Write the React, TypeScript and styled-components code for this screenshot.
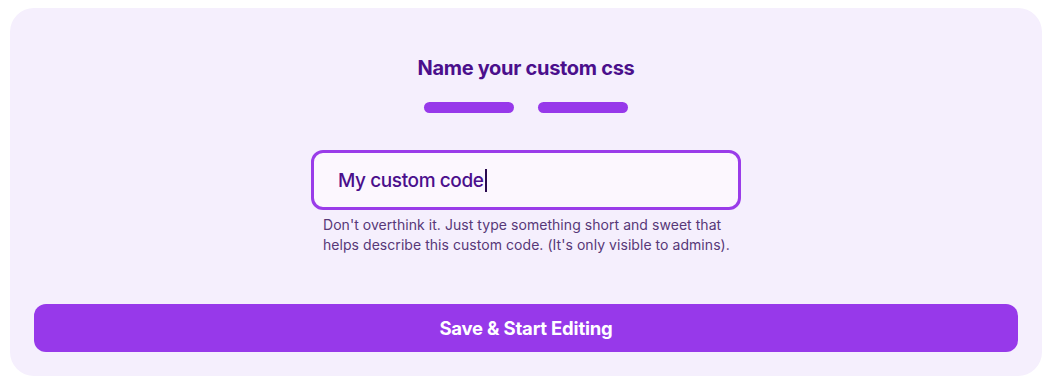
import React from 'react';
import styled, { createGlobalStyle } from 'styled-components';

const GlobalStyle = createGlobalStyle`
  body {
    margin: 0;
    background: #ffffff;
    font-family: Inter, "Noto Sans", sans-serif;
  }
`

export default function App() {
  return (
    <>
      <GlobalStyle />
      <Card>
        <Title>Name your custom css</Title>
        <Steps>
          <Step />
          <Step />
        </Steps>
        <Field>
          <InputBox>
            <InputText>My custom code</InputText>
            <Caret />
          </InputBox>
          <Hint>
            Don't overthink it. Just type something short and sweet that
            helps describe this custom code. (It's only visible to admins).
          </Hint>
        </Field>
        <SaveButton>Save &amp; Start Editing</SaveButton>
      </Card>
    </>
  )
}

const Card = styled.section`
  box-sizing: border-box;
  margin: 8px 10px;
  width: 1032px;
  height: 368px;
  background: #f5effd;
  border-radius: 24px;
  padding: 48px 24px 24px;
  display: flex;
  flex-direction: column;
  align-items: center;
`

const Title = styled.h1`
  margin: 0;
  font-size: 20px;
  line-height: 24px;
  font-weight: 700;
  letter-spacing: -0.3px;
  color: #4b0f8c;
`

const Steps = styled.div`
  display: flex;
  gap: 24px;
  margin-top: 22px;
`

const Step = styled.div`
  width: 90px;
  height: 11px;
  border-radius: 6px;
  background: #9739ea;
`

const Field = styled.div`
  margin-top: 37px;
  width: 430px;
  display: flex;
  flex-direction: column;
`

const InputBox = styled.div`
  box-sizing: border-box;
  height: 60px;
  border: 3px solid #9a3ce9;
  border-radius: 12px;
  background: #fcf7fe;
  padding: 0 24px;
  display: flex;
  align-items: center;
`

const InputText = styled.span`
  font-size: 19px;
  font-weight: 500;
  letter-spacing: -0.4px;
  color: #4b0f8c;
`

const Caret = styled.span`
  width: 2px;
  height: 23px;
  margin-left: 1px;
  background: #2a0a50;
`

const Hint = styled.p`
  margin: 5px 0 0;
  padding: 0 0 0 12px;
  font-size: 14px;
  line-height: 20px;
  letter-spacing: 0.05px;
  color: #573878;
`

const SaveButton = styled.button`
  margin-top: auto;
  align-self: stretch;
  height: 48px;
  border: none;
  border-radius: 12px;
  background: #9739ea;
  color: #ffffff;
  font-family: Inter, "Noto Sans", sans-serif;
  font-size: 18.5px;
  font-weight: 700;
  letter-spacing: -0.2px;
`
